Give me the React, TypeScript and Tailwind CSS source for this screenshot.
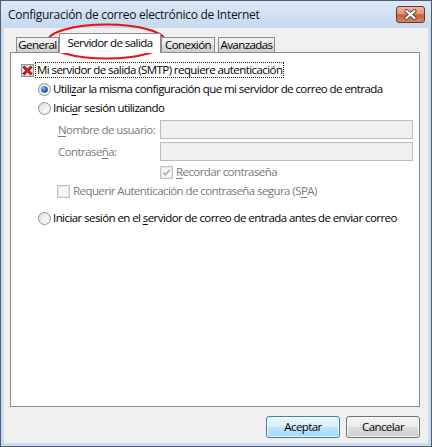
import React from "react";

function Radio({ checked }: { checked?: boolean }) {
  return (
    <svg width="13" height="13" viewBox="0 0 13 13" className="shrink-0">
      <defs>
        <linearGradient id="rg" x1="0" y1="0" x2="1" y2="1">
          <stop offset="0" stopColor="#d6d6d6" />
          <stop offset="0.5" stopColor="#f0f0f0" />
          <stop offset="1" stopColor="#ffffff" />
        </linearGradient>
        <radialGradient id="rd" cx="0.4" cy="0.35" r="0.7">
          <stop offset="0" stopColor="#8cc6f4" />
          <stop offset="0.5" stopColor="#2a74c4" />
          <stop offset="1" stopColor="#123f7a" />
        </radialGradient>
      </defs>
      <circle cx="6.5" cy="6.5" r="6" fill="url(#rg)" stroke="#8f9296" strokeWidth="1" />
      <circle cx="6.5" cy="6.5" r="4.3" fill="none" stroke="#e8e8e8" strokeWidth="0.8" />
      {checked && <circle cx="6.5" cy="6.5" r="3.3" fill="url(#rd)" />}
    </svg>
  );
}

function RedXBox() {
  return (
    <svg width="13" height="13" viewBox="0 0 13 13" className="shrink-0">
      <rect x="0.5" y="0.5" width="12" height="12" fill="#f4f4f4" stroke="#8e8f8f" />
      <rect x="1.5" y="1.5" width="10" height="10" fill="#ffffff" stroke="#dcdcdc" />
      <path d="M3.4 3.4 L9.6 9.6 M9.6 3.4 L3.4 9.6" stroke="#8a0000" strokeWidth="2.8" strokeLinecap="square" />
      <path d="M3.6 3.6 L9.4 9.4 M9.4 3.6 L3.6 9.4" stroke="#ea1b1b" strokeWidth="1.5" strokeLinecap="square" />
    </svg>
  );
}

function DisabledBox({ checked }: { checked?: boolean }) {
  return (
    <svg width="13" height="13" viewBox="0 0 13 13" className="shrink-0">
      <rect x="0.5" y="0.5" width="12" height="12" fill="#f4f4f4" stroke="#c4c4c4" />
      <rect x="1.5" y="1.5" width="10" height="10" fill="#f7f7f7" stroke="#e6e6e6" />
      {checked && (
        <path d="M3.2 6.6 L5.4 8.8 L9.8 3.8" fill="none" stroke="#a9a9a9" strokeWidth="1.6" />
      )}
    </svg>
  );
}

function U({ children }: { children: React.ReactNode }) {
  return <span className="underline underline-offset-[2px]">{children}</span>;
}

const grayBtn =
  "bg-[linear-gradient(#f2f2f2,#ebebeb_50%,#dddddd_50%,#cfcfcf)]";

export default function App() {
  return (
    <div className="relative w-[432px] h-[447px] border border-[#4f5d6e] bg-[#c9dbf1] flex flex-col font-['Open_Sans',sans-serif] text-[11.5px] tracking-[-0.57px] text-black leading-none whitespace-nowrap">
      {/* Title bar */}
      <div className="h-[27px] flex items-center pl-[7px] pr-[6px] bg-[linear-gradient(#dde9f7,#c6d9f0)]">
        <span className="text-[12px] tracking-[-0.3px] text-[#111]">Configuración de correo electrónico de Internet</span>
        <div className="ml-auto mt-[-1px] w-[29px] h-[17px] rounded-[3px] border border-[#6e3324] bg-[linear-gradient(#f0b9a2,#e29274_45%,#c85d3d_52%,#d9835f)] flex items-center justify-center">
          <svg width="13" height="11" viewBox="0 0 13 11">
            <path d="M2.5 2 L10.5 9 M10.5 2 L2.5 9" stroke="#4a4a4a" strokeWidth="4" strokeLinecap="round" />
            <path d="M2.5 2 L10.5 9 M10.5 2 L2.5 9" stroke="#ffffff" strokeWidth="2.2" strokeLinecap="round" />
          </svg>
        </div>
      </div>

      {/* Body */}
      <div className="mx-[3px] h-[415px] bg-[#f0f0f0] flex flex-col pl-[6px] pr-[8px]">
        {/* Tabs */}
        <div className="mt-[5px] h-[19px] flex items-end pl-[6px] relative z-10">
          <div className={`w-[43px] h-[15px] border border-b-0 border-[#898c95] ${grayBtn} flex items-center justify-center`}>
            General
          </div>
          <div className="w-[102px] h-[20px] -mb-px border border-b-0 border-[#898c95] bg-white flex items-center justify-center pb-[1px]">
            Servidor de salida
          </div>
          <div className={`w-[54px] h-[15px] border border-b-0 border-[#898c95] ${grayBtn} flex items-center justify-center`}>
            Conexión
          </div>
          <div className={`ml-[3px] w-[57px] h-[15px] border border-b-0 border-[#898c95] ${grayBtn} flex items-center justify-center`}>
            Avanzadas
          </div>
        </div>

        {/* Panel */}
        <div className="h-[355px] border border-[#898c95] bg-white flex flex-col">
          <div className="mt-[9px] h-[16px] flex items-center pl-[10px]">
            <RedXBox />
            <span className="ml-[1px] h-[16px] px-[1px] flex items-center border border-dotted border-[#222]">
              Mi servidor de salida (SMTP) requiere autenticación
            </span>
          </div>

          <div className="mt-[3px] h-[16px] flex items-center pl-[27px]">
            <Radio checked />
            <span className="ml-[2px]">
              Utili<U>z</U>ar la misma configuración que mi servidor de correo de entrada
            </span>
          </div>

          <div className="mt-[3px] h-[16px] flex items-center pl-[27px]">
            <Radio />
            <span className="ml-[2px]">
              Inici<U>a</U>r sesión utilizando
            </span>
          </div>

          <div className="mt-[4px] h-[19px] flex items-center pl-[47px]">
            <span className="w-[102px] text-[#7a7a7a]">
              <U>N</U>ombre de usuario:
            </span>
            <div className="w-[253px] h-[19px] border border-[#b9bcc0] bg-[#f0f0f0]" />
          </div>

          <div className="mt-[3px] h-[19px] flex items-center pl-[47px]">
            <span className="w-[102px] text-[#7a7a7a]">
              Contrase<U>ñ</U>a:
            </span>
            <div className="w-[253px] h-[19px] border border-[#b9bcc0] bg-[#f0f0f0]" />
          </div>

          <div className="mt-[3px] h-[16px] flex items-center pl-[149px]">
            <DisabledBox checked />
            <span className="ml-[3px] text-[#7a7a7a]">
              <U>R</U>ecordar contraseña
            </span>
          </div>

          <div className="mt-[3px] h-[16px] flex items-center pl-[46px]">
            <DisabledBox />
            <span className="ml-[3px] text-[#7a7a7a]">
              Requerir Autenticación de contraseña segura (S<U>P</U>A)
            </span>
          </div>

          <div className="mt-[11px] h-[16px] flex items-center pl-[27px]">
            <Radio />
            <span className="ml-[2px]">
              Iniciar sesión en el <U>s</U>ervidor de correo de entrada antes de enviar correo
            </span>
          </div>
        </div>

        {/* Buttons */}
        <div className="mt-[9px] flex justify-end gap-[6px]">
          <div className="w-[74px] h-[22px] rounded-[3px] border border-[#3c7fb1] bg-[linear-gradient(#eaf6fd,#d9f0fc_50%,#bee6fd_50%,#a7d9f5)] flex items-center justify-center shadow-[inset_0_0_0_1px_rgba(255,255,255,0.7)]">
            Aceptar
          </div>
          <div className={`w-[74px] h-[22px] rounded-[3px] border border-[#707070] ${grayBtn} flex items-center justify-center shadow-[inset_0_0_0_1px_rgba(255,255,255,0.7)]`}>
            Cancelar
          </div>
        </div>
      </div>

      {/* Red annotation ellipse */}
      <svg
        className="absolute left-[-1px] top-[-1px] pointer-events-none"
        width="432"
        height="447"
        viewBox="0 0 432 447"
      >
        <ellipse cx="106.5" cy="41.5" rx="59" ry="17" fill="none" stroke="#e3141b" strokeWidth="2" />
      </svg>
    </div>
  );
}
